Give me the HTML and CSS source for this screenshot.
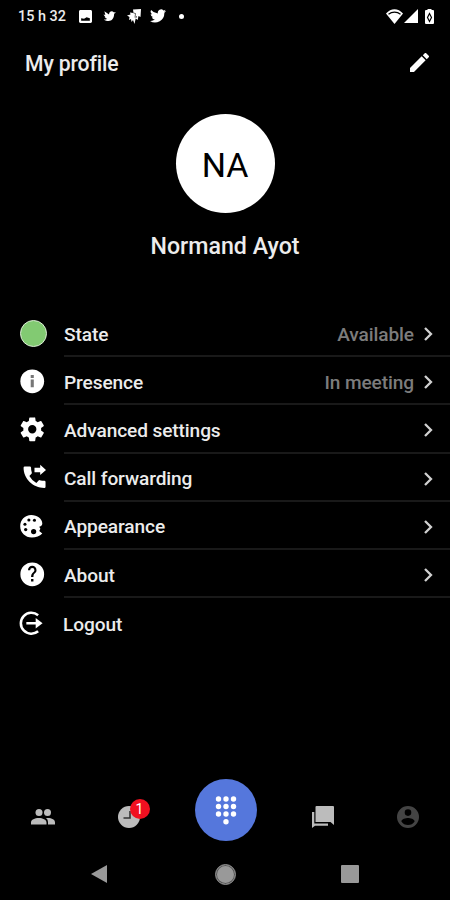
FILE: index.html
```html
<!DOCTYPE html>
<html lang="en">

<head>
    <meta charset="UTF-8">
    <meta name="viewport" content="width=device-width, initial-scale=1.0">
    <title>My profile</title>
    <link rel="stylesheet" href="styles.css">
</head>

<body>
    <div class="status">
        <span class="time">15 h 32</span>
        <svg class="s-photo" viewBox="3 3 18 18"><path d="M21 19V5c0-1.100-.9-2-2-2H5c-1.100 0-2 .9-2 2v14c0 1.100.9 2 2 2h14c1.100 0 2-.9 2-2zM6 14.500l4 .5 3.500-2 4.500 1.500V18H6z"/></svg>
        <svg class="s-bird" viewBox="0 0 14 12"><path d="M14 2.200l-2 1.500C12 8.500 9.500 11.500 6 11.500c-2 0-3.500-.5-5-1.500 1.500 0 2.500-.3 3.300-1L1.500 7.500h1.300L.5 4.500l2 .3L1.500 1l5 3.500C6.500 1 10 0 11.500 2z"/></svg>
        <svg class="s-maps" viewBox="0 0 14 15"><path d="M6 0.500L14 0l-.5 8-2-1-.8 4-2-1.500L7.500 15l-1.500-4-1.500 2-.5-3-2 1 .5-3L0 6.500l3.500-1L3 3.500l3.500.5z"/><path class="cut thin" d="M6.500 4l2 .5-.5 4M9 9l.5-2"/></svg>
        <svg class="s-twitter" viewBox="0 0 24 20"><path d="M24 2.400a10 10 0 0 1-2.800.8A5 5 0 0 0 23.300.5a10 10 0 0 1-3.100 1.200A4.900 4.900 0 0 0 11.800 6.100 14 14 0 0 1 1.700 1a4.900 4.900 0 0 0 1.500 6.500A5 5 0 0 1 1 6.900a4.900 4.900 0 0 0 3.900 4.900 5 5 0 0 1-2.200.1 4.900 4.900 0 0 0 4.600 3.400A10 10 0 0 1 0 17.400 14 14 0 0 0 21.500 5 10 10 0 0 0 24 2.400z"/></svg>
        <span class="dot"></span>
        <svg class="s-wifi" viewBox="0 0 17 15"><path d="M8.500 15L0 4.500C5 -1.200 12 -1.200 17 4.500z"/><path class="cut" d="M2.500 5.300c3.500-3 8.500-3 12 0"/></svg>
        <svg class="s-signal" viewBox="0 0 14 14"><path d="M14 0v14H0z"/></svg>
        <svg class="s-battery" viewBox="0 0 9 15"><path d="M2.500 0h4v1H8q1 0 1 1V14q0 1-1 1H1q-1 0-1-1V2q0-1 1-1h1.500z"/><path class="cut" d="M4.500 4.500L2.500 8.500l2 4 2-4z"/></svg>
    </div>

    <header>
        <h1>My profile</h1>
        <svg class="edit" viewBox="3 3 18 18"><path d="M3 17.250V21h3.750L17.810 9.940l-3.750-3.750L3 17.250zM20.710 7.040a1 1 0 0 0 0-1.410l-2.340-2.340a1 1 0 0 0-1.410 0l-1.830 1.830 3.750 3.750 1.830-1.830z"/></svg>
    </header>

    <section class="profile">
        <div class="avatar">NA</div>
        <h2>Normand Ayot</h2>
    </section>

    <ul class="menu">
        <li>
            <span class="icon"><span class="state"></span></span>
            <div class="row"><span class="label">State</span><span class="value">Available</span><svg class="chevron" viewBox="0 0 9 14"><path d="M1 1l6 6-6 6"/></svg></div>
        </li>
        <li>
            <span class="icon"><svg viewBox="0 0 24 24"><path d="M12 2a10 10 0 1 0 0 20 10 10 0 0 0 0-20z"/><path class="info" d="M10.700 10.500h2.600V17h-2.600zM10.700 6.800h2.600v2.400h-2.600z"/></svg></span>
            <div class="row"><span class="label">Presence</span><span class="value">In meeting</span><svg class="chevron" viewBox="0 0 9 14"><path d="M1 1l6 6-6 6"/></svg></div>
        </li>
        <li>
            <span class="icon"><svg viewBox="0 0 24 24"><path d="M19.430 12.980c.04-.32.07-.64.07-.98s-.03-.66-.07-.98l2.110-1.650c.19-.15.24-.42.12-.64l-2-3.460c-.12-.22-.39-.3-.61-.22l-2.490 1c-.52-.4-1.080-.73-1.690-.98l-.38-2.650A.49.49 0 0 0 14 2h-4c-.25 0-.46.18-.49.42l-.38 2.650c-.61.25-1.170.59-1.690.98l-2.490-1c-.23-.09-.49 0-.61.22l-2 3.460c-.13.22-.07.49.12.64l2.110 1.650c-.04.32-.07.65-.07.98s.03.66.07.98l-2.110 1.650c-.19.15-.24.42-.12.64l2 3.460c.12.22.39.3.61.22l2.490-1c.52.4 1.080.73 1.690.98l.38 2.650c.03.24.24.42.49.42h4c.25 0 .46-.18.49-.42l.38-2.650c.61-.25 1.170-.59 1.690-.98l2.490 1c.23.09.49 0 .61-.22l2-3.460c.12-.22.07-.49-.12-.64l-2.110-1.650zM12 15.500a3.500 3.500 0 1 1 0-7 3.500 3.500 0 0 1 0 7z"/></svg></span>
            <div class="row"><span class="label">Advanced settings</span><svg class="chevron" viewBox="0 0 9 14"><path d="M1 1l6 6-6 6"/></svg></div>
        </li>
        <li>
            <span class="icon call"><svg viewBox="0 0 24 24"><path d="M20.500 15c-1.250 0-2.700-.2-3.800-.57a1 1 0 0 0-1.020.24l-1.900 2.100a15.100 15.100 0 0 1-5.900-5.900l1.800-1.900a1 1 0 0 0 .25-1.020A11.400 11.400 0 0 1 9.300 4a1 1 0 0 0-1-1H4a1 1 0 0 0-1 1c0 9.390 8 17 17.500 17a1 1 0 0 0 1-1v-4a1 1 0 0 0-1-1z"/><path d="M17 10.200l4.900-4.400L17 1.400v2.500h-4.800v3.900H17z"/></svg></span>
            <div class="row"><span class="label">Call forwarding</span><svg class="chevron" viewBox="0 0 9 14"><path d="M1 1l6 6-6 6"/></svg></div>
        </li>
        <li>
            <span class="icon palette"><svg viewBox="0 0 24 24"><path d="M12 2.500c-5.500 0-9.300 4.200-9.300 9.500s4.300 9.500 9.800 9.500c3.500 0 6.700-1.100 8.800-3.300l-2.600-2.200 1-1.800-1-1.700c1.900-.6 2.600-1.700 2.600-2.900 0-3.900-4.200-7.100-9.300-7.100z"/><g class="holes"><circle cx="6.700" cy="10.300" r="1.300"/><circle cx="10" cy="6.700" r="1.300"/><circle cx="14.700" cy="7" r="1.300"/><circle cx="7.300" cy="14.800" r="1.400"/><circle cx="14" cy="16.500" r="2.200"/></g></svg></span>
            <div class="row"><span class="label">Appearance</span><svg class="chevron" viewBox="0 0 9 14"><path d="M1 1l6 6-6 6"/></svg></div>
        </li>
        <li>
            <span class="icon"><svg viewBox="0 0 24 24"><path d="M12 2a10 10 0 1 0 0 20 10 10 0 0 0 0-20zm1 16h-2v-2h2v2zm1.700-7.300l-.9.920C13.200 12.300 13 13 13 14.300h-2v-.5c0-1.100.35-2 1-2.700l1.240-1.260c.37-.36.59-.86.59-1.300a1.800 1.800 0 0 0-3.600 0H8.400a3.600 3.600 0 0 1 7.200 0c0 .88-.36 1.600-.9 2.160z"/></svg></span>
            <div class="row"><span class="label">About</span><svg class="chevron" viewBox="0 0 9 14"><path d="M1 1l6 6-6 6"/></svg></div>
        </li>
        <li class="logout">
            <span class="icon"><svg viewBox="0 0 29 29"><path class="ring" d="M21.500 6.300A10.700 10.700 0 1 0 21.500 22.700M9.500 14.500h10"/><path d="M19 9.200l7 5.300-7 5.300z"/></svg></span>
            <div class="row"><span class="label">Logout</span></div>
        </li>
    </ul>

    <nav class="tabs">
        <a><svg class="people" viewBox="0 0 24 16"><circle cx="8" cy="3.500" r="3.500"/><circle cx="16.500" cy="3.500" r="3.500"/><path d="M0 15.500v-2C0 7.500 15.500 7.500 15.500 13.500v2zM17 15.500v-2.500q0-2.500-2-4C20 8.500 24 10 24 13.500v2z"/></svg></a>
        <a><span class="recent"><svg viewBox="0 0 22 22"><circle cx="11" cy="11" r="11"/><path class="hands" d="M12 5v7H5.500"/></svg><span class="badge">1</span></span></a>
        <a class="dial"><svg viewBox="0 0 22 30"><circle cx="3.500" cy="3" r="2.700"/><circle cx="11" cy="3" r="2.700"/><circle cx="18.500" cy="3" r="2.700"/><circle cx="3.500" cy="10.500" r="2.700"/><circle cx="11" cy="10.500" r="2.700"/><circle cx="18.500" cy="10.500" r="2.700"/><circle cx="3.500" cy="18" r="2.700"/><circle cx="11" cy="18" r="2.700"/><circle cx="18.500" cy="18" r="2.700"/><circle cx="11" cy="25.800" r="2.700"/></svg></a>
        <a><svg class="chat" viewBox="0 0 22 22"><path d="M4.500 0H21q1 0 1 1v18l-3.500-3H3.500V1q0-1 1-1z"/><path d="M0 6h2.300v11.500H16V19.700H3L0 22z"/></svg></a>
        <a><svg class="account" viewBox="2 2 20 20"><path d="M12 2a10 10 0 1 0 0 20 10 10 0 0 0 0-20zm0 3a3 3 0 1 1 0 6 3 3 0 0 1 0-6zm0 14.200a7.200 7.200 0 0 1-6-3.220c.03-1.990 4-3.080 6-3.080s5.970 1.090 6 3.080a7.200 7.200 0 0 1-6 3.220z"/></svg></a>
    </nav>

    <div class="system">
        <svg class="back" viewBox="0 0 16 18"><path d="M16 0v18L0 9z"/></svg>
        <span class="home"></span>
        <span class="square"></span>
    </div>
</body>

</html>
```
FILE: styles.css
```css
* {
    margin: 0;
    padding: 0;
    box-sizing: border-box;
}

body {
    width: 450px;
    height: 900px;
    overflow: hidden;
    background-color: #000;
    color: #ececec;
    font-family: Roboto, sans-serif;
    display: flex;
    flex-direction: column;
}

svg {
    display: block;
    fill: #fff;
    flex-shrink: 0;
}

.status {
    height: 32px;
    padding: 0 16px 0 18px;
    display: flex;
    align-items: center;
}

.time {
    width: 61px;
    padding-top: 1px;
    font-size: 14.4px;
    font-weight: 500;
    white-space: nowrap;
}

.s-photo {
    width: 13px;
    height: 13px;
}

.s-bird {
    width: 13px;
    height: 12px;
    margin-left: 11px;
}

.s-maps {
    width: 14px;
    height: 15px;
    margin-left: 11px;
}

.s-twitter {
    width: 16px;
    height: 14px;
    margin-left: 9px;
}

.dot {
    width: 5px;
    height: 5px;
    margin-left: 13px;
    border-radius: 50%;
    background-color: #fff;
}

.s-wifi {
    width: 17px;
    height: 15px;
    margin-left: auto;
}

.s-signal {
    width: 14px;
    height: 14px;
    margin-left: 1px;
}

.s-battery {
    width: 9px;
    height: 15px;
    margin-left: 7px;
}

.cut {
    fill: none;
    stroke: #000;
    stroke-width: 1.2;
}

.thin {
    stroke-width: 0.6;
}

header {
    height: 62px;
    padding: 0 21px 0 25px;
    display: flex;
    align-items: center;
    justify-content: space-between;
}

h1 {
    font-size: 21.2px;
    font-weight: 500;
    letter-spacing: -0.15px;
}

.edit {
    width: 19px;
    height: 19px;
    margin-top: -2px;
}

.profile {
    height: 215px;
    padding-top: 20px;
    display: flex;
    flex-direction: column;
    align-items: center;
}

.avatar {
    width: 99px;
    height: 99px;
    padding-top: 3px;
    border-radius: 50%;
    background-color: #fff;
    color: #000;
    font-size: 34px;
    font-weight: 400;
    display: flex;
    align-items: center;
    justify-content: center;
}

h2 {
    margin-top: 19px;
    font-size: 23.2px;
    line-height: 28px;
    font-weight: 500;
}

.menu {
    list-style: none;
}

li {
    height: 48.2px;
    display: flex;
    align-items: stretch;
}

.icon {
    width: 64px;
    padding-left: 18px;
    display: flex;
    align-items: center;
}

.icon svg {
    width: 28.5px;
    height: 28.5px;
}

.state {
    width: 27px;
    height: 27px;
    margin-left: 2px;
    border: 1px solid #dcecd6;
    border-radius: 50%;
    background-color: #82ca72;
}

.info {
    fill: #777;
}

.call {
    padding-left: 20px;
}

.palette {
    padding-left: 17px;
}

.holes {
    fill: #000;
}

.row {
    flex: 1;
    padding: 4px 17px 0 0;
    border-bottom: 2px solid #191919;
    display: flex;
    align-items: center;
}

.label {
    font-size: 19.1px;
    font-weight: 500;
    letter-spacing: -0.1px;
}

.value {
    margin-left: auto;
    color: #7c7c7c;
    font-size: 19.1px;
    font-weight: 500;
    letter-spacing: -0.1px;
}

.chevron {
    width: 9px;
    height: 14px;
    margin-left: auto;
    fill: none;
    stroke: #d0d0d0;
    stroke-width: 2.3;
}

.value + .chevron {
    margin-left: 10px;
}

.logout .icon {
    padding: 2px 0 0 17px;
}

.logout .row {
    border-bottom: none;
}

.logout .label {
    margin-left: -1px;
}

.ring {
    fill: none;
    stroke: #fff;
    stroke-width: 2.6;
}

.tabs {
    height: 64px;
    margin-top: auto;
    padding-left: 1px;
    display: grid;
    grid-template-columns: 84px 87px 107px 87px 84px;
    align-items: center;
}

.tabs a {
    display: flex;
    justify-content: center;
    padding-top: 14px;
}

.tabs svg {
    fill: #bcbcbc;
}

.people {
    width: 24px;
    height: 16px;
}

.recent {
    position: relative;
}

.recent svg {
    width: 22px;
    height: 22px;
}

.tabs .hands {
    fill: none;
    stroke: #333;
    stroke-width: 1.6;
}

.badge {
    position: absolute;
    left: 12px;
    top: -7px;
    width: 20px;
    height: 20px;
    border-radius: 50%;
    background-color: #f01020;
    color: #fff;
    font-size: 14px;
    line-height: 20px;
    text-align: center;
}

.tabs .dial {
    width: 62px;
    height: 62px;
    padding: 0;
    justify-self: center;
    align-items: center;
    border-radius: 50%;
    background-color: #5577dc;
}

.tabs .dial svg {
    width: 22px;
    height: 30px;
    margin-top: 2px;
    fill: #fff;
}

.chat {
    width: 22px;
    height: 22px;
}

.tabs .account {
    width: 22px;
    height: 22px;
    fill: #444;
}

.system {
    height: 58px;
    padding: 6px 91px 0;
    display: flex;
    align-items: center;
    justify-content: space-between;
}

.system svg {
    width: 16px;
    height: 18px;
    fill: #999;
}

.home {
    width: 21px;
    height: 21px;
    margin-left: 2px;
    border: 1px solid #888;
    border-radius: 50%;
    background-color: #999;
    box-shadow: inset 0 0 0 1px #555;
}

.square {
    width: 18px;
    height: 18px;
    border-radius: 1px;
    background-color: #999;
}
```
